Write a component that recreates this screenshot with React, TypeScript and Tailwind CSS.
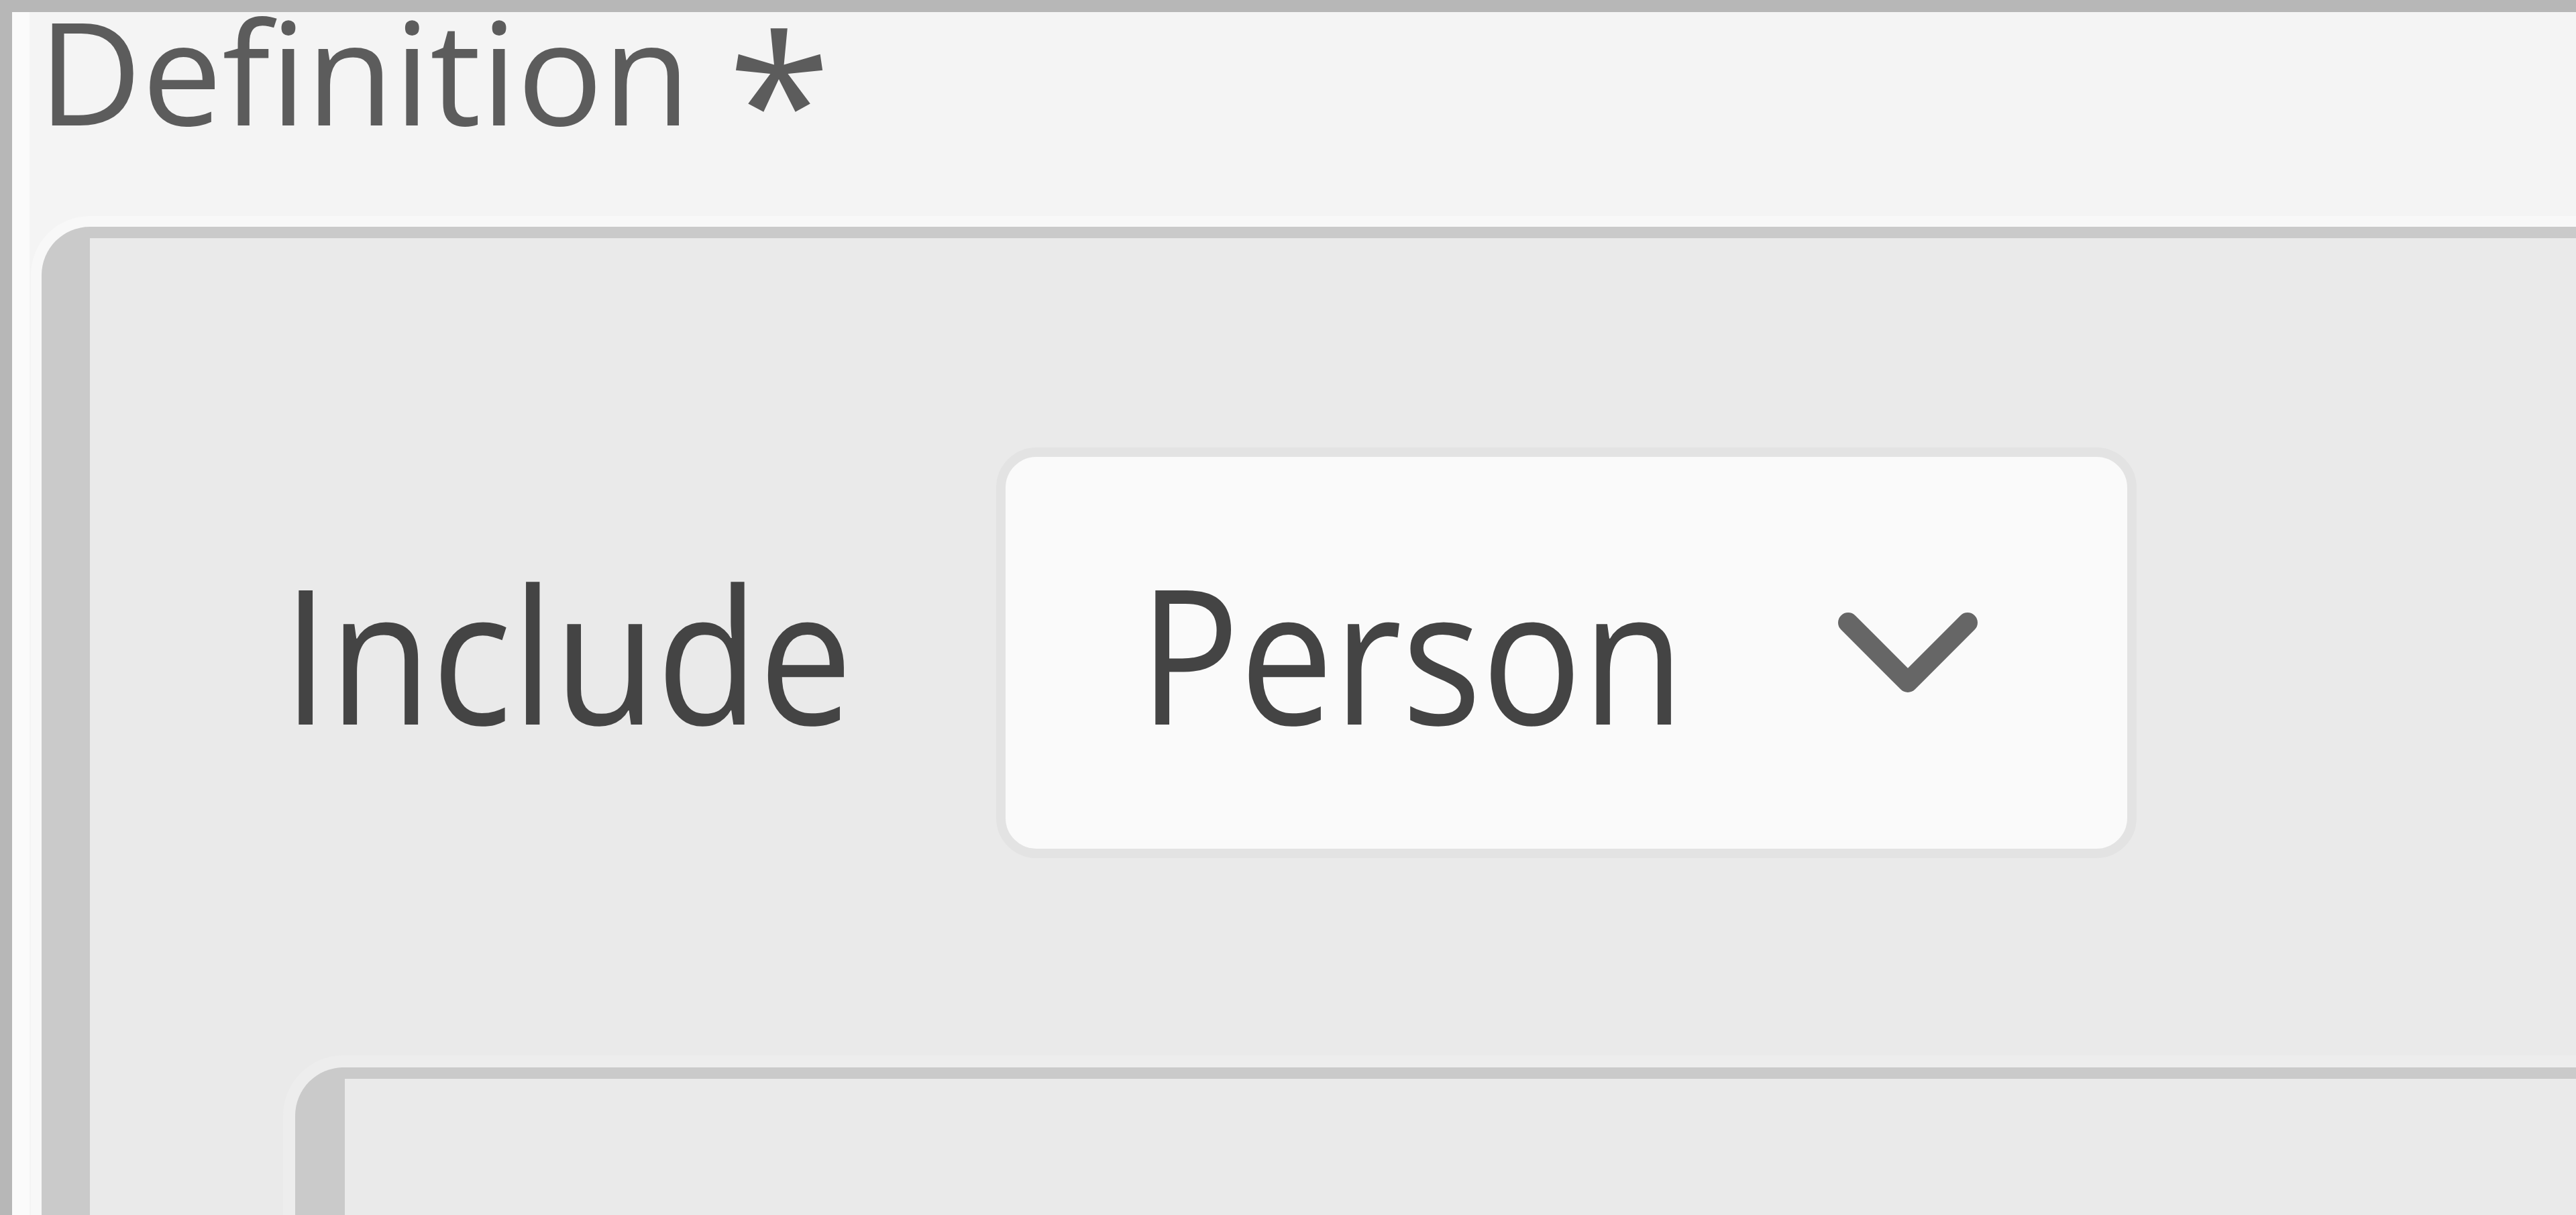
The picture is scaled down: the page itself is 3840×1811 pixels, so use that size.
export default function App() {
    return (
        <div className="flex h-screen w-full flex-col overflow-hidden border-t-[18px] border-l-[18px] border-[#b7b7b7] bg-[#f4f4f4] font-['Open_Sans',sans-serif]">
            <div className="flex flex-1 flex-col border-l-[26px] border-[#fbfbfb]">
                <div className="mt-[10px] pl-[13px] text-[213px] leading-[152px] text-[#5c5c5c]">
                    Definition{" "}
                    <span className="relative top-[68px] text-[280px] leading-[0px]">*</span>
                </div>

                <section className="mt-[158px] ml-[18px] flex flex-1 flex-col rounded-tl-[72px] border-t-[17px] border-l-[72px] border-[#cacaca] bg-[#eaeaea] shadow-[0_0_0_16px_#f8f8f8]">
                    <div className="flex items-center pt-[312px] pl-[287px]">
                        <div className="w-[1064px] shrink-0">
                            <span className="block origin-left scale-x-[0.89] pb-[2px] text-[280px] leading-[300px] font-medium text-[#444444]">
                                Include
                            </span>
                        </div>
                        <div className="flex h-[612px] w-[1700px] shrink-0 items-center rounded-[60px] border-[14px] border-[#e3e3e3] bg-[#fafafa] pl-[199px]">
                            <div className="w-[1040px] shrink-0">
                                <span className="block origin-left scale-x-[0.89] pb-[2px] text-[280px] leading-[300px] font-medium text-[#444444]">
                                    Person
                                </span>
                            </div>
                            <svg width="212" height="124" viewBox="0 0 212 124" fill="none">
                                <polyline
                                    points="17,17 106,106 195,17"
                                    stroke="#666666"
                                    strokeWidth="30"
                                    strokeLinecap="round"
                                    strokeLinejoin="round"
                                />
                            </svg>
                        </div>
                    </div>

                    <div className="mt-[312px] ml-[306px] h-[600px] rounded-tl-[72px] border-t-[17px] border-l-[74px] border-[#cacaca] bg-[#eaeaea] shadow-[0_0_0_18px_#ededed]" />
                </section>
            </div>
        </div>
    );
}
